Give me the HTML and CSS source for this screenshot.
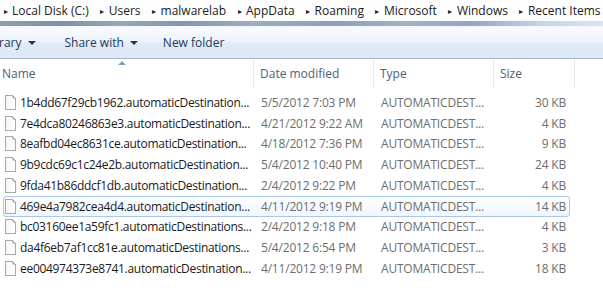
FILE: index.html
```html
<!DOCTYPE html>
<html>
<head>
<meta charset="utf-8">
<link rel="stylesheet" href="styles.css">
</head>
<body>
<div class="addr">
  <span class="crumb"><span class="sep">▸</span>Local Disk (C:)</span>
  <span class="crumb"><span class="sep">▸</span>Users</span>
  <span class="crumb"><span class="sep">▸</span>malwarelab</span>
  <span class="crumb"><span class="sep">▸</span>AppData</span>
  <span class="crumb"><span class="sep">▸</span>Roaming</span>
  <span class="crumb"><span class="sep">▸</span>Microsoft</span>
  <span class="crumb"><span class="sep">▸</span>Windows</span>
  <span class="crumb"><span class="sep">▸</span>Recent Items</span>
</div>
<div class="addrframe"></div>
<div class="toolbar">
  <span class="tb tb-lib">rary<span class="caret"></span></span>
  <span class="tb tb-share">Share with<span class="caret"></span></span>
  <span class="tb tb-new">New folder</span>
</div>
<div class="header">
  <div class="hcol hname">Name<span class="sort"></span></div>
  <div class="hcol hdate">Date modified</div>
  <div class="hcol htype">Type</div>
  <div class="hcol hsize">Size</div>
  <div class="hcol hrest"></div>
</div>
<div class="rows">
  <div class="row"><div class="c name"><span class="ficon"></span><span class="fn">1b4dd67f29cb1962.automaticDestination...</span></div><div class="c date">5/5/2012 7:03 PM</div><div class="c type">AUTOMATICDEST...</div><div class="c size">30 KB</div></div>
  <div class="row"><div class="c name"><span class="ficon"></span><span class="fn">7e4dca80246863e3.automaticDestination...</span></div><div class="c date">4/21/2012 9:22 AM</div><div class="c type">AUTOMATICDEST...</div><div class="c size">4 KB</div></div>
  <div class="row"><div class="c name"><span class="ficon"></span><span class="fn">8eafbd04ec8631ce.automaticDestination...</span></div><div class="c date">4/18/2012 7:36 PM</div><div class="c type">AUTOMATICDEST...</div><div class="c size">9 KB</div></div>
  <div class="row"><div class="c name"><span class="ficon"></span><span class="fn">9b9cdc69c1c24e2b.automaticDestination...</span></div><div class="c date">5/4/2012 10:40 PM</div><div class="c type">AUTOMATICDEST...</div><div class="c size">24 KB</div></div>
  <div class="row"><div class="c name"><span class="ficon"></span><span class="fn">9fda41b86ddcf1db.automaticDestination...</span></div><div class="c date">2/4/2012 9:22 PM</div><div class="c type">AUTOMATICDEST...</div><div class="c size">4 KB</div></div>
  <div class="row hot"><div class="c name"><span class="ficon"></span><span class="fn">469e4a7982cea4d4.automaticDestination...</span></div><div class="c date">4/11/2012 9:19 PM</div><div class="c type">AUTOMATICDEST...</div><div class="c size">14 KB</div></div>
  <div class="row"><div class="c name"><span class="ficon"></span><span class="fn">bc03160ee1a59fc1.automaticDestinations...</span></div><div class="c date">2/4/2012 9:18 PM</div><div class="c type">AUTOMATICDEST...</div><div class="c size">4 KB</div></div>
  <div class="row"><div class="c name"><span class="ficon"></span><span class="fn">da4f6eb7af1cc81e.automaticDestinations...</span></div><div class="c date">5/4/2012 6:54 PM</div><div class="c type">AUTOMATICDEST...</div><div class="c size">3 KB</div></div>
  <div class="row"><div class="c name"><span class="ficon"></span><span class="fn">ee004974373e8741.automaticDestination...</span></div><div class="c date">4/11/2012 9:19 PM</div><div class="c type">AUTOMATICDEST...</div><div class="c size">18 KB</div></div>
</div>
</body>
</html>
```
FILE: styles.css
```css
html, body {
  margin: 0;
  padding: 0;
  background: #ffffff;
  overflow: hidden;
  width: 603px;
  height: 288px;
}
body {
  font-family: "Open Sans", "Noto Sans", sans-serif;
  font-size: 12px;
}
.addr {
  height: 21px;
  display: flex;
  align-items: center;
  background: #fdfdfe;
  color: #1b1b1b;
  white-space: nowrap;
  overflow: hidden;
}
.crumb {
  display: flex;
  align-items: center;
}
.sep {
  display: inline-block;
  width: 11px;
  margin-right: 1px;
  font-size: 8px;
  color: #222;
  text-align: center;
}
.crumb + .crumb .sep {
  margin-left: 8px;
}
.addrframe {
  height: 5px;
  background: linear-gradient(90deg, #8d9cb0 0, #7f91a8 10%, #98a6b9 20%, #8396ae 30%, #9eacc0 42%, #8ea0b8 55%, #a2b2c7 68%, #90a6c4 78%, #c4d6ea 90%, #d8e4f1 100%);
  border-bottom: 1px solid #f3f6fa;
}
.toolbar {
  height: 31px;
  display: flex;
  align-items: center;
  background: linear-gradient(180deg, #f8fbfe 0, #eef4fb 45%, #e1eaf5 55%, #dee8f4 100%);
  border-bottom: 1px solid #a5b4c8;
  color: #1e395b;
  white-space: nowrap;
}
.tb {
  display: flex;
  align-items: center;
}
.tb-lib { margin-left: -1px; }
.tb-share { margin-left: 29px; }
.tb-new { margin-left: 25px; }
.caret {
  display: inline-block;
  width: 0;
  height: 0;
  border-left: 4px solid transparent;
  border-right: 4px solid transparent;
  border-top: 4px solid #1e395b;
  margin-left: 6px;
  margin-top: 1px;
}
.header {
  height: 28px;
  display: flex;
  color: #4c607a;
  background: #ffffff;
}
.hcol {
  position: relative;
  display: flex;
  align-items: center;
  border-right: 1px solid #e4eaf1;
  box-sizing: border-box;
}
.hname { width: 254px; padding-left: 2px; }
.hdate { width: 120px; padding-left: 6px; }
.htype { width: 120px; padding-left: 6px; }
.hsize { width: 81px; padding-left: 6px; }
.hrest { flex: 1; border-right: none; }
.sort {
  position: absolute;
  left: 118px;
  top: 2px;
  width: 0;
  height: 0;
  border-left: 4px solid transparent;
  border-right: 4px solid transparent;
  border-bottom: 4px solid #7f9cbd;
}
.rows {
  padding-top: 5px;
}
.row {
  margin-left: 3px;
  width: 567px;
  height: 20.75px;
  box-sizing: border-box;
  border: 1px solid transparent;
  border-radius: 3px;
  display: flex;
  align-items: center;
  white-space: nowrap;
  letter-spacing: -0.2px;
}
.row.hot {
  border-color: #a9c6ec;
  background: linear-gradient(180deg, #fbfdff 0, #f2f7fe 100%);
}
.c { overflow: hidden; flex-shrink: 0; }
.name {
  width: 250px;
  padding-left: 1px;
  box-sizing: border-box;
  display: flex;
  align-items: center;
  color: #1a1a1a;
}
.fn {
  letter-spacing: -0.3px;
}
.ficon {
  flex-shrink: 0;
  position: relative;
  display: inline-block;
  width: 11px;
  height: 15px;
  box-sizing: border-box;
  border: 1px solid #a9a9a9;
  background: linear-gradient(90deg, #f6f6f6, #ffffff);
  margin-right: 4px;
}
.ficon::after {
  content: "";
  position: absolute;
  right: -1px;
  top: -1px;
  width: 4px;
  height: 4px;
  background: linear-gradient(225deg, #ffffff 0, #ffffff 50%, #a9a9a9 50%, #a9a9a9 65%, #e6e6e6 65%);
}
.date, .type {
  width: 120px;
  padding-left: 7px;
  box-sizing: border-box;
  color: #6d6d6d;
}
.size {
  width: 72px;
  text-align: right;
  color: #6d6d6d;
}
```
